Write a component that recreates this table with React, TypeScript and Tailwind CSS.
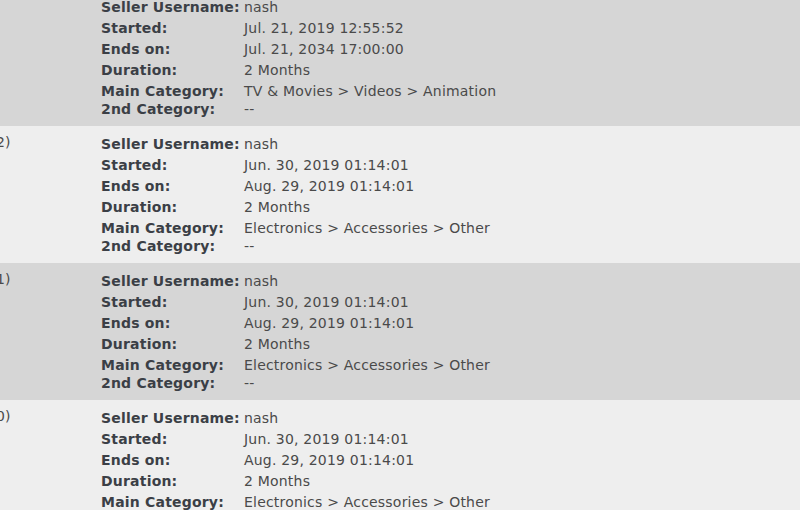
const rows = [
  {
    n: "",
    started: "Jul. 21, 2019 12:55:52",
    ends: "Jul. 21, 2034 17:00:00",
    category: "TV & Movies > Videos > Animation",
  },
  {
    n: "2)",
    started: "Jun. 30, 2019 01:14:01",
    ends: "Aug. 29, 2019 01:14:01",
    category: "Electronics > Accessories > Other",
  },
  {
    n: "1)",
    started: "Jun. 30, 2019 01:14:01",
    ends: "Aug. 29, 2019 01:14:01",
    category: "Electronics > Accessories > Other",
  },
  {
    n: "0)",
    started: "Jun. 30, 2019 01:14:01",
    ends: "Aug. 29, 2019 01:14:01",
    category: "Electronics > Accessories > Other",
  },
];

function Line({ label, value, tall = true }: { label: string; value: string; tall?: boolean }) {
  return (
    <div className={tall ? "flex h-[21px] items-center" : "flex h-[15px] items-center"}>
      <span className="w-[143px] shrink-0 font-bold text-[#3b3f46]">{label}</span>
      <span className="text-[#4a4a4a]">{value}</span>
    </div>
  );
}

export default function App() {
  return (
    <div className="h-[510px] w-[800px] overflow-hidden bg-[#eeeeee] font-['DejaVu_Sans',Verdana,sans-serif] text-[14px] tracking-[0.2px]">
      <div className="-mt-[11px] flex flex-col">
        {rows.map((r, i) => (
          <div
            key={i}
            className={
              i % 2 === 0
                ? "flex h-[137px] bg-[#d6d6d6] pt-[8px]"
                : "flex h-[137px] bg-[#eeeeee] pt-[8px]"
            }
          >
            <div className="w-[101px] shrink-0 -translate-x-[4px] -translate-y-[2px] leading-[21px] text-[#4a4a4a]">
              {r.n}
            </div>
            <div className="flex flex-col">
              <Line label="Seller Username:" value="nash" />
              <Line label="Started:" value={r.started} />
              <Line label="Ends on:" value={r.ends} />
              <Line label="Duration:" value="2 Months" />
              <Line label="Main Category:" value={r.category} />
              <Line label="2nd Category:" value="--" tall={false} />
            </div>
          </div>
        ))}
      </div>
    </div>
  );
}
